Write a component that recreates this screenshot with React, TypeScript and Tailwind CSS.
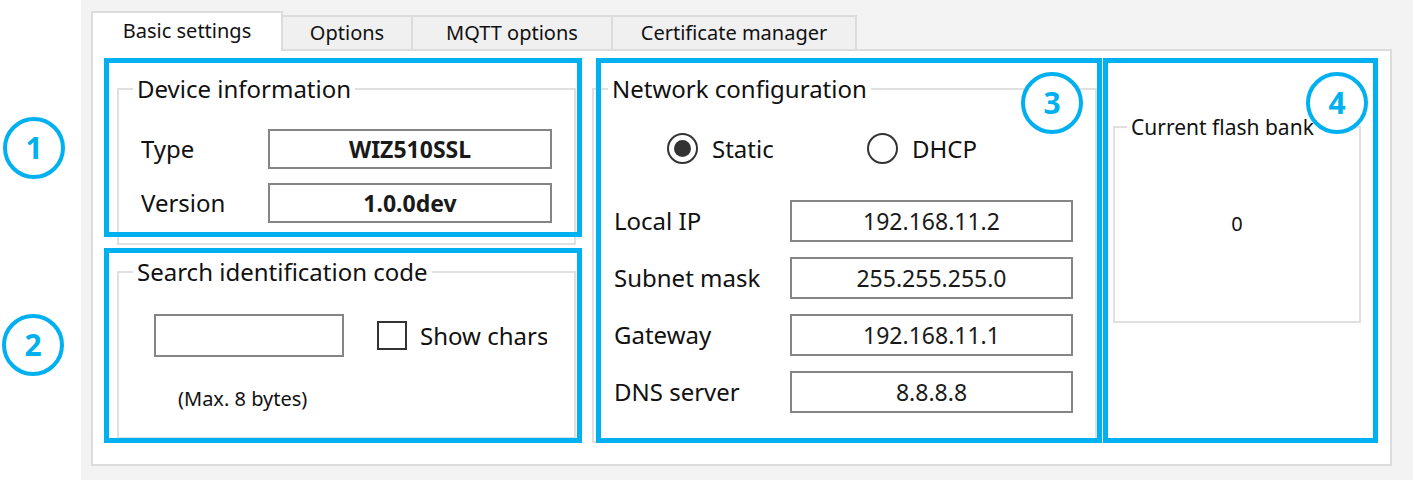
import React from "react";

function Group({ title, className, legendClass, children }: { title: string; className?: string; legendClass?: string; children: React.ReactNode }) {
  return (
    <fieldset className={"border-2 border-[#e0e0e0] " + (className ?? "")}>
      <legend className={legendClass ?? "ml-[14px] px-[4px] text-[24px] leading-[24px]"}>{title}</legend>
      {children}
    </fieldset>
  );
}

function Field({ value, bold, w, h }: { value: string; bold?: boolean; w: string; h: string }) {
  return (
    <div className={`${w} ${h} flex items-center justify-center border-2 border-[#858585] bg-white text-[23px] text-[#1a1a1a] ${bold ? "font-bold text-[23px]" : ""}`}>
      {value}
    </div>
  );
}

function Radio({ checked, label }: { checked?: boolean; label: string }) {
  return (
    <div className="flex items-center gap-[14px]">
      <span className="flex h-[31px] w-[31px] items-center justify-center rounded-full border-2 border-[#333]">
        {checked && <span className="h-[17px] w-[17px] rounded-full bg-[#333]" />}
      </span>
      <span className="text-[24px] leading-[24px]">{label}</span>
    </div>
  );
}

const netRows = [
  ["Local IP", "192.168.11.2"],
  ["Subnet mask", "255.255.255.0"],
  ["Gateway", "192.168.11.1"],
  ["DNS server", "8.8.8.8"],
];

function Marker({ n, pos }: { n: string; pos: string }) {
  return (
    <div className={`absolute ${pos} flex h-[62px] w-[62px] items-center justify-center rounded-full border-[4px] border-[#00b0f0] bg-white text-[30px] font-bold leading-none text-[#00b0f0]`}>
      {n}
    </div>
  );
}

export default function App() {
  return (
    <div className="relative flex h-[480px] w-[1413px] overflow-hidden bg-white font-['Noto_Sans',sans-serif] text-[#111]">
      <div className="w-[81px] shrink-0" />
      <div className="flex-1 bg-[#f3f3f3] pl-[10px] pt-[11px]">
        <div className="w-[1301px]">
          {/* Tabs */}
          <div className="flex h-[38px] items-end">
            <div className="relative z-10 -mb-[2px] flex h-[40px] w-[192px] items-center justify-center border-2 border-b-0 border-[#dcdcdc] bg-white pb-[2px] text-[20px]">
              Basic settings
            </div>
            <div className="flex h-[34px] w-[130px] items-center justify-center border-2 border-b-0 border-l-0 border-[#dcdcdc] bg-[#f0f0f0] text-[20px]">
              Options
            </div>
            <div className="flex h-[34px] w-[200px] items-center justify-center border-2 border-b-0 border-l-0 border-[#dcdcdc] bg-[#f0f0f0] text-[20px]">
              MQTT options
            </div>
            <div className="flex h-[34px] w-[244px] items-center justify-center border-2 border-b-0 border-l-0 border-[#dcdcdc] bg-[#f0f0f0] text-[20px]">
              Certificate manager
            </div>
          </div>

          {/* Pane */}
          <div className="flex h-[417px] gap-[16px] border-2 border-[#dcdcdc] bg-white pl-[24px] pt-[26px]">
            <div className="flex w-[459px] flex-col gap-[15px]">
              <Group title="Device information" className="h-[168px]">
                <div className="flex flex-col gap-[14px] pl-[22px] pt-[28px]">
                  <div className="flex items-center">
                    <span className="w-[127px] text-[24px]">Type</span>
                    <Field value="WIZ510SSL" bold w="w-[284px]" h="h-[40px]" />
                  </div>
                  <div className="flex items-center">
                    <span className="w-[127px] text-[24px]">Version</span>
                    <Field value="1.0.0dev" bold w="w-[284px]" h="h-[40px]" />
                  </div>
                </div>
              </Group>
              <Group title="Search identification code" className="h-[179px]">
                <div className="pl-[35px] pt-[30px]">
                  <div className="flex items-center">
                    <div className="h-[43px] w-[190px] border-2 border-[#858585] bg-white" />
                    <div className="ml-[33px] flex w-[170px] items-center gap-[13px] overflow-hidden whitespace-nowrap">
                      <span className="h-[29px] w-[30px] shrink-0 border-2 border-[#333]" />
                      <span className="text-[24px] leading-[24px]">Show chars</span>
                    </div>
                  </div>
                  <div className="ml-[24px] mt-[30px] text-[20px] leading-[24px]">(Max. 8 bytes)</div>
                </div>
              </Group>
            </div>

            <Group title="Network configuration" className="h-[366px] w-[505px]">
              <div className="flex pl-[73px] pt-[32px]">
                <div className="w-[200px]">
                  <Radio checked label="Static" />
                </div>
                <Radio label="DHCP" />
              </div>
              <div className="flex flex-col gap-[15px] pl-[20px] pt-[36px]">
                {netRows.map(([label, value]) => (
                  <div key={label} className="flex items-center">
                    <span className="w-[176px] text-[24px]">{label}</span>
                    <Field value={value} w="w-[283px]" h="h-[42px]" />
                  </div>
                ))}
              </div>
            </Group>

            <Group
              title="Current flash bank"
              className="mt-[39px] h-[207px] w-[248px]"
              legendClass="ml-[12px] px-[4px] text-[21px] leading-[22px]"
            >
              <div className="flex h-[183px] items-center justify-center pb-[11px] text-[20px]">0</div>
            </Group>
          </div>
        </div>
      </div>

      {/* Annotation overlays */}
      <div className="absolute left-[104px] top-[58px] h-[179px] w-[478px] border-[5px] border-[#00b0f0]" />
      <div className="absolute left-[104px] top-[248px] h-[195px] w-[478px] border-[5px] border-[#00b0f0]" />
      <div className="absolute left-[596px] top-[58px] h-[385px] w-[506px] border-[5px] border-[#00b0f0]" />
      <div className="absolute left-[1103px] top-[58px] h-[385px] w-[275px] border-[5px] border-[#00b0f0]" />
      <Marker n="1" pos="left-[3px] top-[117px]" />
      <Marker n="2" pos="left-[2px] top-[314px]" />
      <Marker n="3" pos="left-[1021px] top-[72px]" />
      <Marker n="4" pos="left-[1306px] top-[72px]" />
    </div>
  );
}
